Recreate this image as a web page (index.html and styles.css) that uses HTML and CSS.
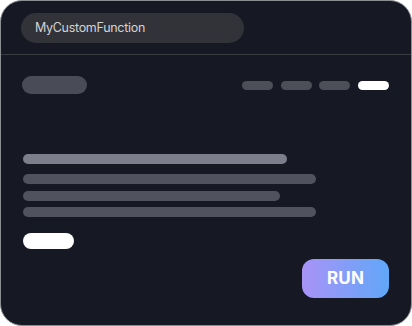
FILE: index.html
```html
<!DOCTYPE html>
<html>
<head>
<meta charset="utf-8">
<link rel="stylesheet" href="styles.css">
</head>
<body>
<div class="card">
  <div class="header">
    <div class="name-input">MyCustomFunction</div>
  </div>
  <div class="content">
    <div class="toolbar">
      <div class="tag"></div>
      <div class="tabs">
        <span class="tab"></span>
        <span class="tab"></span>
        <span class="tab"></span>
        <span class="tab active"></span>
      </div>
    </div>
    <div class="text-block">
      <div class="line title" style="width:264px"></div>
      <div class="lines">
        <div class="line" style="width:293px"></div>
        <div class="line" style="width:257px"></div>
        <div class="line" style="width:293px"></div>
      </div>
      <div class="chip"></div>
    </div>
    <div class="actions">
      <button class="run">RUN</button>
    </div>
  </div>
</div>
</body>
</html>
```
FILE: styles.css
```css
html, body {
  margin: 0;
  padding: 0;
  background: #ffffff;
}
.card {
  box-sizing: border-box;
  width: 412px;
  height: 326px;
  background: #161824;
  border: 1px solid #8d8e94;
  border-radius: 22px;
  display: flex;
  flex-direction: column;
  overflow: hidden;
}
.header {
  padding: 12px 20px 11px;
  border-bottom: 1px solid #3a3b42;
}
.name-input {
  box-sizing: border-box;
  width: 223px;
  height: 30px;
  border-radius: 15px;
  background: #323339;
  color: #d2d2d7;
  font-family: Inter, "Noto Sans", sans-serif;
  font-size: 12.5px;
  letter-spacing: -0.3px;
  line-height: 30px;
  padding-left: 14px;
}
.content {
  flex: 1;
  display: flex;
  flex-direction: column;
  padding: 21px 22px 0 21px;
}
.toolbar {
  display: flex;
  justify-content: space-between;
  align-items: center;
  height: 18px;
}
.tag {
  width: 65px;
  height: 18px;
  border-radius: 9px;
  background: #494b56;
}
.tabs {
  display: flex;
  gap: 7.7px;
  align-items: center;
}
.tab {
  display: block;
  width: 31px;
  height: 9px;
  border-radius: 5px;
  background: #4c4e58;
}
.tab.active {
  background: #ffffff;
}
.text-block {
  margin-top: 60px;
  padding-left: 1px;
  display: flex;
  flex-direction: column;
  align-items: flex-start;
}
.line {
  height: 10px;
  border-radius: 5px;
  background: #50535d;
}
.line.title {
  background: #7c7e8c;
}
.lines {
  margin-top: 10px;
  display: flex;
  flex-direction: column;
  gap: 6.7px;
}
.chip {
  margin-top: 15.5px;
  width: 51px;
  height: 16px;
  border-radius: 8px;
  background: #ffffff;
}
.actions {
  display: flex;
  justify-content: flex-end;
  margin-top: 10px;
  padding-right: 0;
}
.run {
  width: 87px;
  height: 39px;
  border: none;
  border-radius: 12px;
  background: linear-gradient(90deg, #a993f7 0%, #60a7f8 100%);
  color: #ffffff;
  font-family: Inter, Roboto, sans-serif;
  font-weight: 700;
  font-size: 17px;
  letter-spacing: 0.2px;
  padding: 0;
  cursor: pointer;
}
```
